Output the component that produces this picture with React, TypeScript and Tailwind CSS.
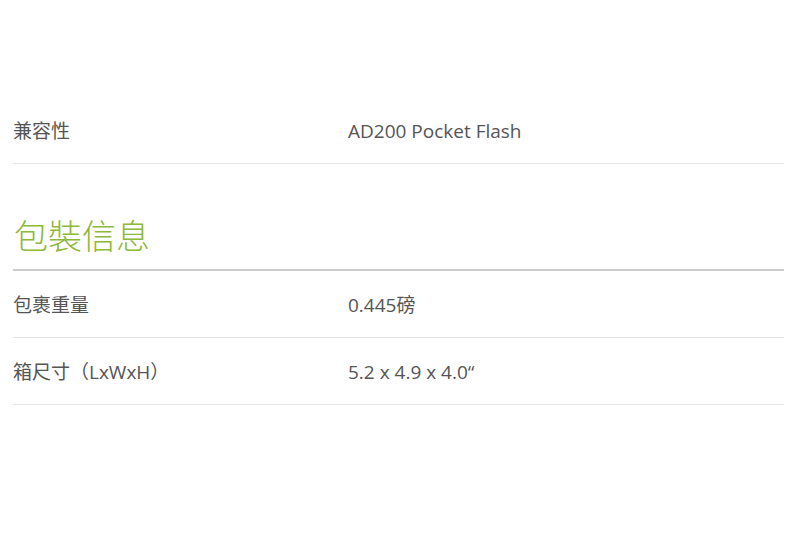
const rows1 = [{ label: "兼容性", value: "AD200 Pocket Flash" }];

const rows2 = [
  { label: "包裹重量", value: "0.445磅" },
  { label: "箱尺寸（LxWxH）", value: "5.2 x 4.9 x 4.0“" },
];

function SpecRow({ label, value }: { label: string; value: string }) {
  return (
    <div className="flex items-center border-b border-[#e5e5e5] pt-[21px] pb-[19px] text-[19px] leading-[26px] text-[#555]">
      <div className="w-[335px] shrink-0">{label}</div>
      <div className="flex-1">{value}</div>
    </div>
  );
}

export default function App() {
  return (
    <div
      className="w-[800px] h-[533px] bg-white pl-[13px] pr-[16px] pt-[97px]"
      style={{ fontFamily: '"Open Sans", "Noto Sans CJK TC", sans-serif' }}
    >
      {rows1.map((r) => (
        <SpecRow key={r.label} label={r.label} value={r.value} />
      ))}
      <h2 className="mt-[50px] border-b-2 border-[#cccccc] pb-[11px] pl-[1px] text-[34px] leading-[44px] font-light text-[#8cb83c]">
        包裝信息
      </h2>
      {rows2.map((r) => (
        <SpecRow key={r.label} label={r.label} value={r.value} />
      ))}
    </div>
  );
}
